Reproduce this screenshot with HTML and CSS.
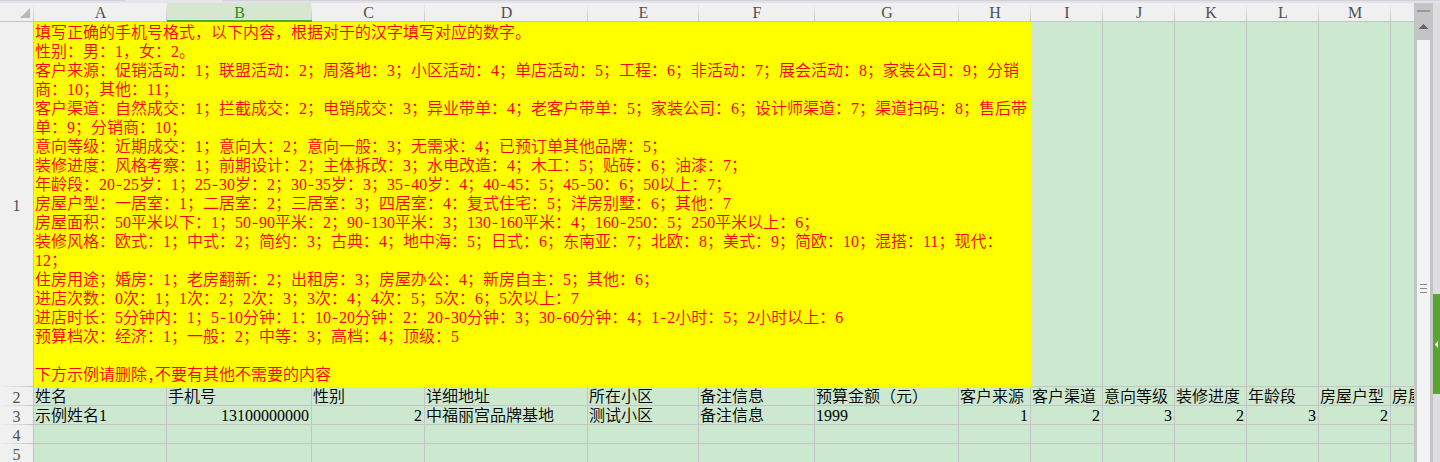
FILE: index.html
```html
<!DOCTYPE html>
<html lang="zh-CN">
<head>
<meta charset="utf-8">
<title>客户导入模板</title>
<link rel="stylesheet" href="styles.css">
</head>
<body>
<div class="tabstrip"><span class="tabstrip-active"></span></div>
<div class="workspace">
<main class="sheet">
<table class="grid">
<colgroup>
<col class="w-head"><col class="w-a"><col class="w-b"><col class="w-c"><col class="w-d"><col class="w-e"><col class="w-f"><col class="w-g"><col class="w-std"><col class="w-std"><col class="w-std"><col class="w-std"><col class="w-std"><col class="w-std"><col class="w-std">
</colgroup>
<thead>
<tr><th class="corner"><svg width="10" height="10" viewBox="0 0 10 10"><path d="M10 0V10H0Z" fill="#b8b8b8"/></svg></th><th>A</th><th class="selected">B</th><th>C</th><th>D</th><th>E</th><th>F</th><th>G</th><th>H</th><th>I</th><th>J</th><th>K</th><th>L</th><th>M</th><th></th></tr>
</thead>
<tbody>
<tr class="tall"><th>1</th><td class="notes" colspan="8">填写正确的手机号格式，以下内容，根据对于的汉字填写对应的数字。
性别：男：1，女：2。
客户来源：促销活动：1；联盟活动：2；周落地：3；小区活动：4；单店活动：5；工程：6；非活动：7；展会活动：8；家装公司：9；分销
商：10；其他：11；
客户渠道：自然成交：1；拦截成交：2；电销成交：3；异业带单：4；老客户带单：5；家装公司：6；设计师渠道：7；渠道扫码：8；售后带
单：9；分销商：10；
意向等级：近期成交：1；意向大：2；意向一般：3；无需求：4；已预订单其他品牌：5；
装修进度：风格考察：1；前期设计：2；主体拆改：3；水电改造：4；木工：5；贴砖：6；油漆：7；
年龄段：20<span>-</span>25岁：1；25<span>-</span>30岁：2；30<span>-</span>35岁：3；35<span>-</span>40岁：4；40<span>-</span>45：5；45<span>-</span>50：6；50以上：7；
房屋户型：一居室：1；二居室：2；三居室：3；四居室：4：复式住宅：5；洋房别墅：6；其他：7
房屋面积：50平米以下：1；50<span>-</span>90平米：2；90<span>-</span>130平米：3；130<span>-</span>160平米：4；160<span>-</span>250：5；250平米以上：6；
装修风格：欧式：1；中式：2；简约：3；古典：4；地中海：5；日式：6；东南亚：7；北欧：8；美式：9；简欧：10；混搭：11；现代：
12；
住房用途；婚房：1；老房翻新：2；出租房：3；房屋办公：4；新房自主：5；其他：6；
进店次数：0次：1；1次：2；2次：3；3次：4；4次：5；5次：6；5次以上：7
进店时长：5分钟内：1；5<span>-</span>10分钟：1：10<span>-</span>20分钟：2：20<span>-</span>30分钟：3；30<span>-</span>60分钟：4；1<span>-</span>2小时：5；2小时以上：6
预算档次：经济：1；一般：2；中等：3；高档：4；顶级：5

下方示例请删除<span>,</span>不要有其他不需要的内容</td><td></td><td></td><td></td><td></td><td></td><td></td></tr>
<tr><th>2</th><td>姓名</td><td>手机号</td><td>性别</td><td>详细地址</td><td>所在小区</td><td>备注信息</td><td>预算金额（元）</td><td>客户来源</td><td>客户渠道</td><td>意向等级</td><td>装修进度</td><td>年龄段</td><td>房屋户型</td><td>房屋面积</td></tr>
<tr><th>3</th><td>示例姓名1</td><td class="num">13100000000</td><td class="num">2</td><td>中福丽宫品牌基地</td><td>测试小区</td><td>备注信息</td><td>1999</td><td class="num">1</td><td class="num">2</td><td class="num">3</td><td class="num">2</td><td class="num">3</td><td class="num">2</td><td></td></tr>
<tr><th>4</th><td></td><td></td><td></td><td></td><td></td><td></td><td></td><td></td><td></td><td></td><td></td><td></td><td></td><td></td></tr>
<tr><th>5</th><td></td><td></td><td></td><td></td><td></td><td></td><td></td><td></td><td></td><td></td><td></td><td></td><td></td><td></td></tr>
</tbody>
</table>
</main>
<div class="scrollbar">
<span class="split-handle"></span>
<button class="scroll-up" aria-label="向上滚动"><svg width="9" height="5" viewBox="0 0 9 5" shape-rendering="crispEdges"><path d="M4 0h1v1h1v1h1v1h1v1h1v1H0V4h1V3h1V2h1V1h1z" fill="#666"/></svg></button>
<div class="thumb"><span class="grip"></span></div>
</div>
<aside class="side">
<button class="side-toggle" aria-label="展开侧栏"><svg width="3" height="7" viewBox="0 0 3 7"><path d="M3 0V7L0 3.5Z" fill="#fff"/></svg></button>
</aside>
</div>
</body>
</html>
```
FILE: styles.css
```css
* { box-sizing: border-box; }

body {
  margin: 0;
  height: 100vh;
  display: flex;
  flex-direction: column;
  overflow: hidden;
  background: #dddde0;
  font: 350 16px/19px "Liberation Serif", "Noto Sans CJK SC", serif;
  color: #000;
}

button { border: 0; padding: 0; }
svg { display: block; }

.tabstrip {
  flex: none;
  height: 3px;
  padding-left: 125px;
  background: linear-gradient(#d2d2d8 1px, #e3e3e7 1px);
}
.tabstrip-active {
  display: block;
  width: 98px;
  height: 3px;
  background: #e6e6ea;
}

.workspace {
  flex: 1;
  min-height: 0;
  display: flex;
}

.sheet {
  flex: 1;
  min-width: 0;
  overflow: hidden;
  background: #cce8cf;
}

.grid {
  width: 1463px;
  table-layout: fixed;
  border-collapse: separate;
  border-spacing: 0;
}
.w-head { width: 34px; }
.w-a { width: 133px; }
.w-b { width: 145px; }
.w-c { width: 113px; }
.w-d { width: 163px; }
.w-e { width: 111px; }
.w-f { width: 116px; }
.w-g { width: 144px; }
.w-std { width: 72px; }

th, td {
  height: 19px;
  padding: 2px 2px 0 1px;
  border-right: 1px solid #c4c4c6;
  border-bottom: 1px solid #c4c4c6;
  line-height: 16px;
  text-align: left;
  white-space: nowrap;
}
th {
  padding: 1px 0 0;
  background: #f0f0f0;
  color: #505050;
  font-weight: 400;
  line-height: 17px;
  text-align: center;
}

thead th {
  padding-top: 2px;
  line-height: 16px;
  border-right: 0;
  background: linear-gradient(#f0f0f0, #c4c4c6) right / 1px 100% no-repeat #f0f0f0;
}
thead .selected {
  border-bottom: 2px solid #5aa532;
  line-height: 15px;
  background-color: #d7e6cf;
  color: #2c8a0c;
}
thead .corner { padding: 2px 3px 0 20px; }

tbody th {
  border-bottom: 0;
  background: linear-gradient(to right, #f0f0f0, #c4c4c6) bottom / 100% 1px no-repeat #f0f0f0;
}

.tall td, .tall th { height: 365px; }
.tall .notes {
  padding: 1px 2px 0 1px;
  border-color: #ff0;
  background: #ff0;
  color: #f00;
  line-height: 19px;
  vertical-align: top;
  white-space: pre;
}
.notes span {
  font-family: "Noto Sans Mono CJK SC", monospace;
  line-height: 1px;
}
.num { text-align: right; }

.scrollbar {
  flex: none;
  width: 19px;
  padding: 7px 3px 0;
  display: flex;
  flex-direction: column;
  background: #c4c4c6;
}
.split-handle { height: 2px; background: #999; }
.scroll-up {
  height: 28px;
  display: flex;
  align-items: center;
  justify-content: center;
  background: none;
}
.thumb {
  flex: 1;
  display: flex;
  justify-content: center;
  align-items: flex-start;
  padding-top: 244px;
  background: #f3f3f3;
}
.grip {
  width: 7px;
  height: 9px;
  background: repeating-linear-gradient(#888 0 1px, transparent 1px 4px);
}

.side { flex: none; width: 7px; padding-top: 291px; }
.side-toggle {
  width: 7px;
  height: 100px;
  display: flex;
  align-items: center;
  justify-content: center;
  background: #5aa532;
}
```
